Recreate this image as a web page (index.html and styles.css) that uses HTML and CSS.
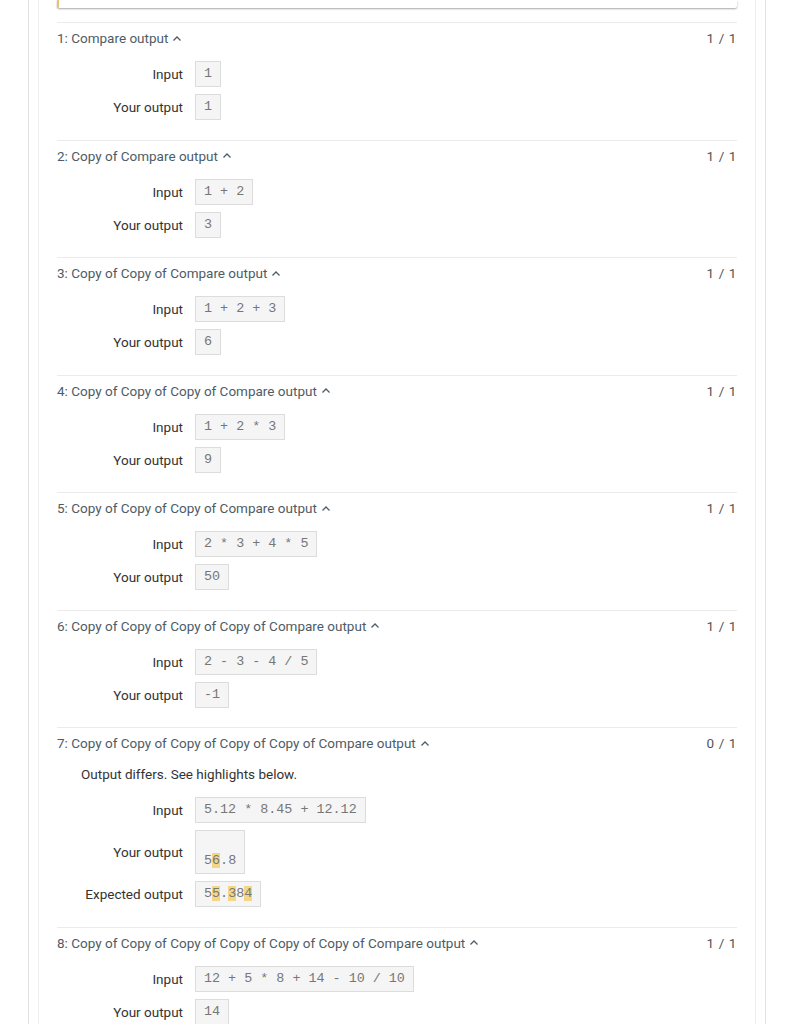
FILE: index.html
```html
<!DOCTYPE html>
<html>
<head>
<meta charset="utf-8">
<link rel="stylesheet" href="styles.css">
</head>
<body>
<div class="frame">
  <div class="panel">
    <div class="content">
      <div class="topcard"></div>

      <div class="test">
        <div class="test-head"><span class="title">1: Compare output <svg class="chev" viewBox="0 0 10 10"><polyline points="1.5,6.5 5,3 8.5,6.5"/></svg></span><span class="score">1 / 1</span></div>
        <div class="rows">
          <div class="label">Input</div><pre class="box">1</pre>
          <div class="label">Your output</div><pre class="box">1</pre>
        </div>
      </div>

      <div class="test">
        <div class="test-head"><span class="title">2: Copy of Compare output <svg class="chev" viewBox="0 0 10 10"><polyline points="1.5,6.5 5,3 8.5,6.5"/></svg></span><span class="score">1 / 1</span></div>
        <div class="rows">
          <div class="label">Input</div><pre class="box">1 + 2</pre>
          <div class="label">Your output</div><pre class="box">3</pre>
        </div>
      </div>

      <div class="test">
        <div class="test-head"><span class="title">3: Copy of Copy of Compare output <svg class="chev" viewBox="0 0 10 10"><polyline points="1.5,6.5 5,3 8.5,6.5"/></svg></span><span class="score">1 / 1</span></div>
        <div class="rows">
          <div class="label">Input</div><pre class="box">1 + 2 + 3</pre>
          <div class="label">Your output</div><pre class="box">6</pre>
        </div>
      </div>

      <div class="test">
        <div class="test-head"><span class="title">4: Copy of Copy of Copy of Compare output <svg class="chev" viewBox="0 0 10 10"><polyline points="1.5,6.5 5,3 8.5,6.5"/></svg></span><span class="score">1 / 1</span></div>
        <div class="rows">
          <div class="label">Input</div><pre class="box">1 + 2 * 3</pre>
          <div class="label">Your output</div><pre class="box">9</pre>
        </div>
      </div>

      <div class="test">
        <div class="test-head"><span class="title">5: Copy of Copy of Copy of Compare output <svg class="chev" viewBox="0 0 10 10"><polyline points="1.5,6.5 5,3 8.5,6.5"/></svg></span><span class="score">1 / 1</span></div>
        <div class="rows">
          <div class="label">Input</div><pre class="box">2 * 3 + 4 * 5</pre>
          <div class="label">Your output</div><pre class="box">50</pre>
        </div>
      </div>

      <div class="test">
        <div class="test-head"><span class="title">6: Copy of Copy of Copy of Copy of Compare output <svg class="chev" viewBox="0 0 10 10"><polyline points="1.5,6.5 5,3 8.5,6.5"/></svg></span><span class="score">1 / 1</span></div>
        <div class="rows">
          <div class="label">Input</div><pre class="box">2 - 3 - 4 / 5</pre>
          <div class="label">Your output</div><pre class="box">-1</pre>
        </div>
      </div>

      <div class="test">
        <div class="test-head"><span class="title">7: Copy of Copy of Copy of Copy of Copy of Compare output <svg class="chev" viewBox="0 0 10 10"><polyline points="1.5,6.5 5,3 8.5,6.5"/></svg></span><span class="score">0 / 1</span></div>
        <div class="message">Output differs. See highlights below.</div>
        <div class="rows">
          <div class="label">Input</div><pre class="box">5.12 * 8.45 + 12.12</pre>
          <div class="label">Your output</div><pre class="box"><span></span>&#10;5<span class="hl">6</span>.8</pre>
          <div class="label">Expected output</div><pre class="box">5<span class="hl">5</span>.<span class="hl">3</span>8<span class="hl">4</span></pre>
        </div>
      </div>

      <div class="test">
        <div class="test-head"><span class="title">8: Copy of Copy of Copy of Copy of Copy of Copy of Compare output <svg class="chev" viewBox="0 0 10 10"><polyline points="1.5,6.5 5,3 8.5,6.5"/></svg></span><span class="score">1 / 1</span></div>
        <div class="rows">
          <div class="label">Input</div><pre class="box">12 + 5 * 8 + 14 - 10 / 10</pre>
          <div class="label">Your output</div><pre class="box">14</pre>
        </div>
      </div>
    </div>
  </div>
</div>
</body>
</html>
```

FILE: styles.css
```css
html, body {
  margin: 0;
  padding: 0;
  background: #ffffff;
}

body {
  font-family: Roboto, "Liberation Sans", Arial, sans-serif;
  font-size: 13.5px;
  color: #333;
}

.frame {
  margin-left: 28px;
  width: 718px;
  border-left: 1px solid #e2e2e2;
  border-right: 1px solid #e2e2e2;
  padding: 0 9px;
  min-height: 1100px;
}

.panel {
  border-left: 1px solid #ededed;
  border-right: 1px solid #ededed;
  min-height: 1100px;
}

.content {
  padding: 0 18px;
}

.topcard {
  height: 8px;
  border-left: 2px solid #e6c46f;
  border-radius: 0 0 2px 2px;
  box-shadow: 0 1px 2px rgba(0, 0, 0, 0.35);
  margin-bottom: 14px;
  background: #fff;
}

.test {
  border-top: 1px solid #ebebeb;
  padding: 5px 0 19.5px;
}

.test-head {
  display: flex;
  justify-content: space-between;
  align-items: center;
  height: 20px;
  line-height: 20px;
}

.title {
  color: #4e5c66;
  display: flex;
  align-items: center;
}

.chev {
  width: 10px;
  height: 10px;
  margin-left: 4px;
  margin-top: 1px;
}

.chev polyline {
  fill: none;
  stroke: #4e5c66;
  stroke-width: 1.3;
}

.score {
  color: #555;
  letter-spacing: 0.6px;
}

.message {
  margin-top: 11px;
  margin-left: 24px;
  line-height: 20px;
  color: #333;
}

.rows {
  display: grid;
  grid-template-columns: 126px auto;
  column-gap: 12px;
  row-gap: 7px;
  margin-top: 13px;
  justify-items: start;
  align-items: center;
}

.label {
  justify-self: end;
  color: #333;
  white-space: nowrap;
}

.box {
  margin: 0;
  font-family: "Liberation Mono", "DejaVu Sans Mono", monospace;
  font-size: 13.4px;
  line-height: 18px;
  color: #777;
  background: #f5f5f5;
  border: 1px solid #dcdcdc;
  padding: 3px 8px;
  white-space: pre;
}

.hl {
  background: #f5d687;
}
```
